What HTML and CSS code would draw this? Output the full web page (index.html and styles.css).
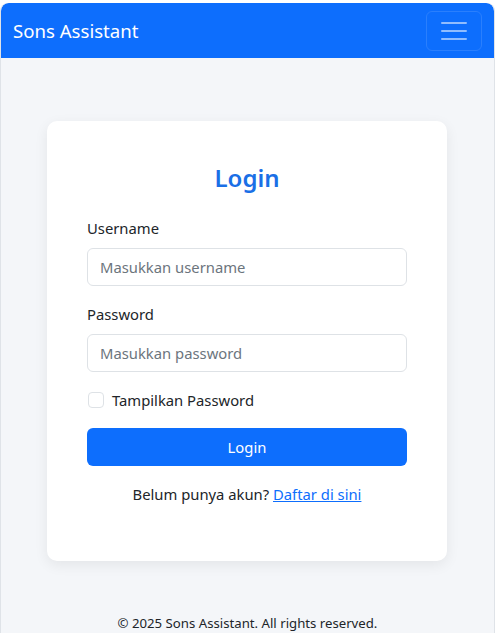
FILE: index.html
```html
<!DOCTYPE html>
<html lang="id">
<head>
<meta charset="utf-8">
<title>Sons Assistant - Login</title>
<link rel="stylesheet" href="styles.css">
</head>
<body>
<div class="frame">
  <nav class="navbar">
    <span class="brand">Sons Assistant</span>
    <button class="toggler" type="button" aria-label="Menu">
      <svg width="30" height="30" viewBox="0 0 30 30"><path d="M3 7h24M3 15h24M3 23h24" stroke="rgba(255,255,255,0.55)" stroke-width="2" stroke-linecap="round"/></svg>
    </button>
  </nav>
  <main class="main">
    <div class="card">
      <h2 class="title">Login</h2>
      <form class="form">
        <div class="field">
          <label class="label" for="u">Username</label>
          <input class="input" id="u" type="text" placeholder="Masukkan username">
        </div>
        <div class="field">
          <label class="label" for="p">Password</label>
          <input class="input" id="p" type="password" placeholder="Masukkan password">
        </div>
        <div class="check">
          <span class="box"></span>
          <span>Tampilkan Password</span>
        </div>
        <button class="btn" type="button">Login</button>
      </form>
      <p class="register">Belum punya akun? <a href="#">Daftar di sini</a></p>
    </div>
  </main>
  <footer class="footer">© 2025 Sons Assistant. All rights reserved.</footer>
</div>
</body>
</html>
```
FILE: styles.css
```css
* { box-sizing: border-box; }
html, body { margin: 0; padding: 0; background: #ffffff; }
body {
  font-family: "Noto Sans", "Segoe UI", sans-serif;
  font-size: 14.8px;
  line-height: 24px;
  color: #212529;
  padding-top: 3px;
}
.frame {
  border: 1px solid #dfe3e8;
  border-top: none;
  border-radius: 8px 8px 0 0;
  background: #f4f6f9;
  min-height: 640px;
  overflow: hidden;
}
.navbar {
  height: 55px;
  background: #0d6efd;
  display: flex;
  align-items: center;
  justify-content: space-between;
  padding: 0 12px;
  border-radius: 8px 8px 0 0;
}
.brand {
  color: #ffffff;
  font-size: 18.6px;
  line-height: 30px;
}
.toggler {
  width: 56px;
  height: 40px;
  background: transparent;
  border: 1px solid rgba(255,255,255,0.12);
  border-radius: 6px;
  display: flex;
  align-items: center;
  justify-content: center;
  padding: 0;
}
.main {
  padding: 63px 47px 50px 46px;
}
.card {
  background: #ffffff;
  border-radius: 10px;
  box-shadow: 0 4px 14px rgba(0,0,0,0.07);
  padding: 41px 40px 40px;
}
.title {
  margin: 0 0 23px;
  text-align: center;
  color: #1a6fe6;
  font-size: 24px;
  line-height: 31px;
  font-weight: 600;
}
.form { display: flex; flex-direction: column; gap: 16px; }
.label { display: block; margin-bottom: 8px; }
.input {
  display: block;
  width: 100%;
  height: 38px;
  border: 1px solid #dee2e6;
  border-radius: 6px;
  padding: 0 12px;
  font: inherit;
  color: #212529;
  background: #fff;
}
.input::placeholder { color: #6c757d; }
.check { display: flex; align-items: center; gap: 8px; }
.box {
  width: 16px; height: 16px;
  border: 1px solid #dee2e6;
  border-radius: 4px;
  margin-left: 1px;
  background: #fff;
}
.btn {
  height: 38px;
  border: none;
  border-radius: 6px;
  background: #0d6efd;
  color: #fff;
  font: inherit;
}
.register {
  margin: 16px 0 15px;
  text-align: center;
}
.register a { color: #0d6efd; text-decoration: underline; }
.footer {
  text-align: center;
  font-size: 13.2px;
  line-height: 24px;
}
```
